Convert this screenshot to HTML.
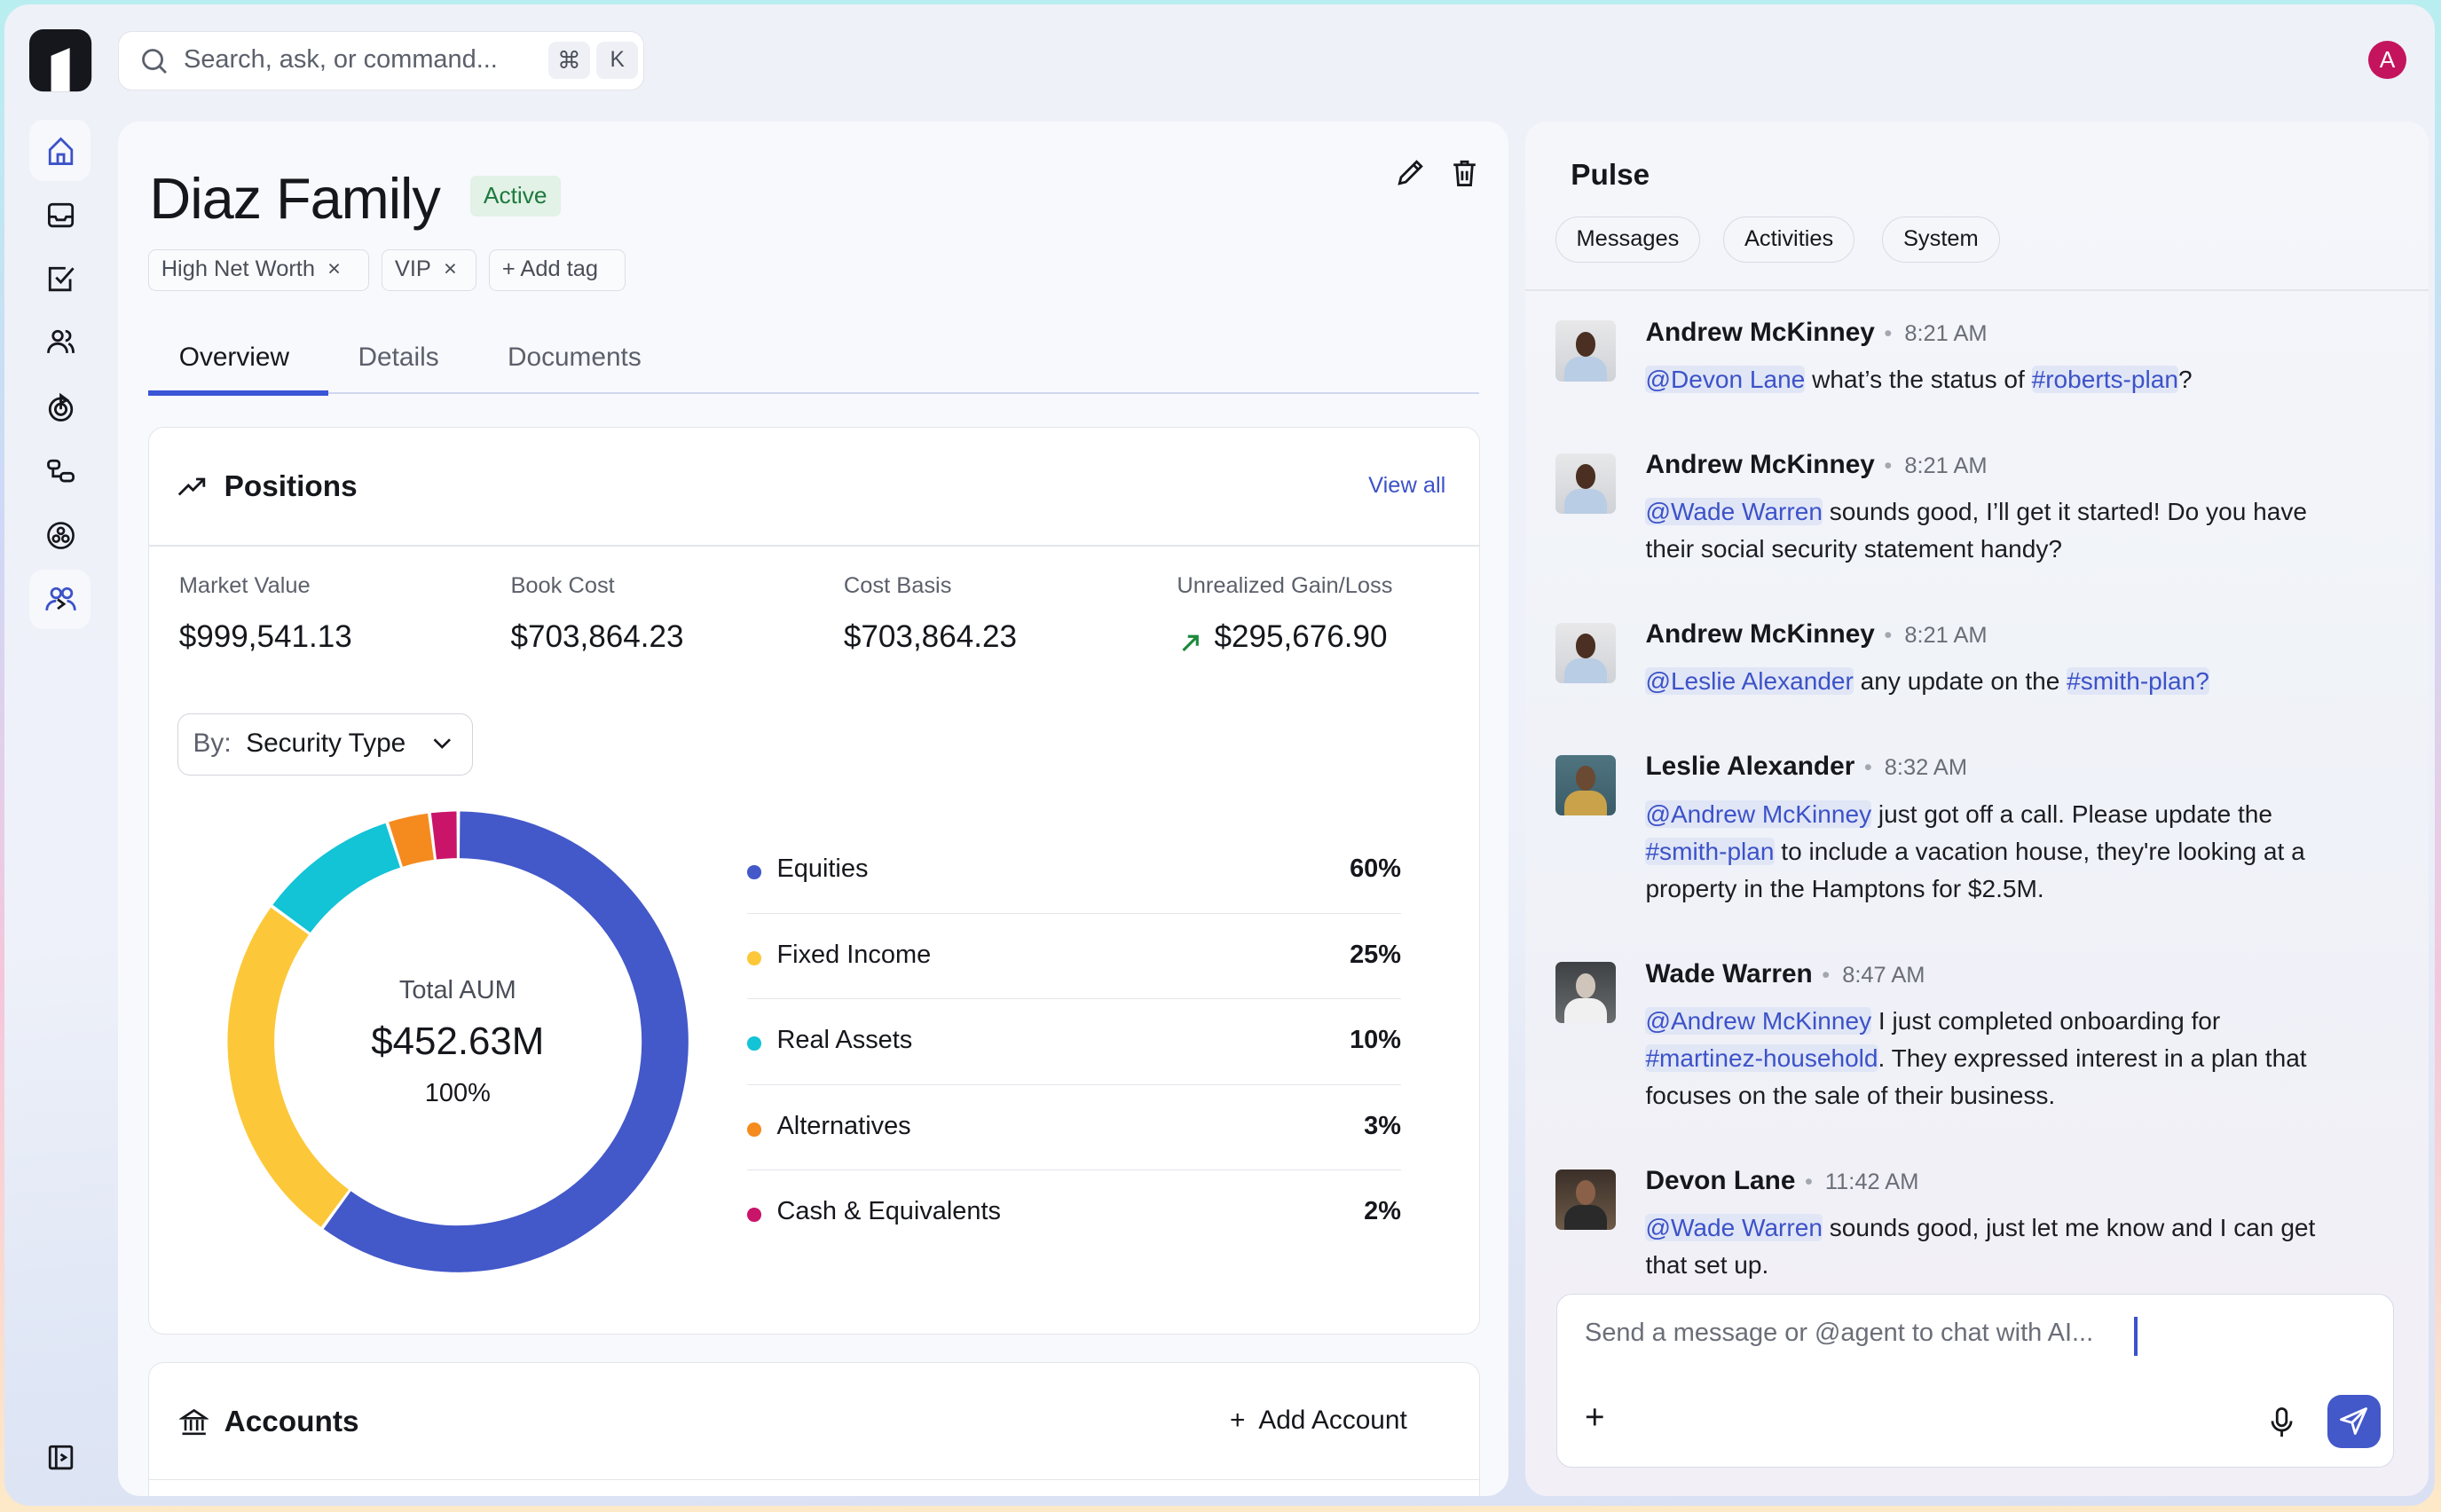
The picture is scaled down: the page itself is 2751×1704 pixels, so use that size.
<!DOCTYPE html>
<html><head><meta charset="utf-8">
<style>
*{box-sizing:border-box;margin:0;padding:0}
html,body{width:2751px;height:1704px;overflow:hidden;background:#fff}
#z{zoom:1.75446;width:1568px;height:971.3px;position:relative;font-family:"Liberation Sans",sans-serif;color:#16171c;
background:linear-gradient(180deg,#b9eef0 0%,#cfd8f6 35%,#f4c6dc 65%,#fde9c8 100%);}
.frame{position:absolute;left:3px;top:3px;right:4px;bottom:4px;border-radius:16px;background:linear-gradient(175deg,#eef1f8 0%,#eef1f9 55%,#dfe6f5 80%,#d9e0f3 100%)}
.abs{position:absolute}
.card{position:absolute;background:#f8f9fc;border-radius:14px}
.ic{position:absolute;left:29px;width:20px;height:20px}
.tag{position:absolute;top:160px;height:27px;border:1px solid #dcdee4;border-radius:5px;font-size:14.5px;color:#4a4e58;padding:4px 8px;background:#fafbfd}
.lbl{position:absolute;top:368px;font-size:14.5px;color:#5c606b}
.val{position:absolute;top:398px;font-size:20px;color:#16171c}
.leg{position:absolute;left:480px;width:420px;height:55px;font-size:16.5px;border-bottom:1px solid #e3e5ea}
.leg span.d{position:absolute;left:0;top:24px;width:9px;height:9px;border-radius:50%}
.leg span.t{position:absolute;left:19px;top:17px}
.leg span.p{position:absolute;right:0;top:17px;font-weight:bold}
.pill{position:absolute;top:139px;height:30px;border:1px solid #d8dbe3;border-radius:15px;font-size:14.5px;padding:6px 13px;background:#f5f6fa}
.msg{position:absolute;left:999px;width:540px}
.av{position:absolute;left:0;top:0;width:39px;height:39px;border-radius:4px;overflow:hidden;background:linear-gradient(#e8e8ea,#cfd2d6)}
.av i{position:absolute;left:13px;top:7px;width:13px;height:16px;border-radius:50%;background:#4a2f22}
.av b{position:absolute;left:6px;top:23px;width:27px;height:20px;border-radius:10px 10px 0 0;background:#b9cde4}
.nm{position:absolute;left:58px;top:-2px;font-size:17px;font-weight:bold;white-space:nowrap}
.nm em{font-style:normal;font-weight:normal;color:#6a6e78;font-size:14.5px;margin-left:6px}
.nm em:before{content:"•";color:#a3a7b0;margin-right:8px}
.tx{position:absolute;left:58px;top:26px;width:440px;font-size:16px;line-height:24px;color:#1c1d22}
.m{color:#3c52c8;background:#e1e6f6;border-radius:3px;white-space:nowrap}
</style></head><body><div id="z">
<div class="frame"></div>
<svg class="abs" style="left:19px;top:19px" width="40" height="40" viewBox="0 0 40 40"><rect width="40" height="40" rx="9" fill="#16171c"/><path d="M14 40V17l12-5V40z" fill="#fff"/></svg>
<div class="abs" style="left:76px;top:20px;width:338px;height:38px;background:#fff;border:1px solid #e2e4ea;border-radius:9px"></div>
<svg class="abs" style="left:90px;top:30px" width="18" height="18" viewBox="0 0 18 18" fill="none" stroke="#5c606b" stroke-width="1.6"><circle cx="8" cy="8" r="6"/><path d="M12.5 12.5l4 4"/></svg>
<div class="abs" style="left:118px;top:29px;font-size:16.5px;color:#5c606b">Search, ask, or command...</div>
<div class="abs" style="left:352px;top:27px;width:27px;height:24px;border-radius:5px;background:#eef0f6;font-size:15px;text-align:center;line-height:24px;color:#4a4e58">⌘</div>
<div class="abs" style="left:383px;top:27px;width:27px;height:24px;border-radius:5px;background:#eef0f6;font-size:14px;text-align:center;line-height:24px;color:#4a4e58">K</div>
<div class="abs" style="left:1521px;top:26px;width:25px;height:25px;border-radius:50%;background:#c4145e;color:#fff;font-size:15px;text-align:center;line-height:25px">A</div>
<div class="abs" style="left:19px;top:77px;width:39px;height:39px;border-radius:9px;background:#f7f8fc"></div>
<div class="abs" style="left:19px;top:366px;width:39px;height:38px;border-radius:9px;background:#f7f8fc"></div>
<svg class="ic" style="top:87px" viewBox="0 0 20 20" fill="none" stroke="#3c52c8" stroke-width="1.6"><path d="M3 9l7-7 7 7v9H3z M8 18v-6h4v6"/></svg>
<svg class="ic" style="top:128px" viewBox="0 0 20 20" fill="none" stroke="#16171c" stroke-width="1.6"><rect x="2.5" y="3" width="15" height="14" rx="2"/><path d="M2.5 11h4l1 2h5l1-2h4"/></svg>
<svg class="ic" style="top:169px" viewBox="0 0 20 20" fill="none" stroke="#16171c" stroke-width="1.6"><path d="M16 10v7H3V3h10"/><path d="M7 9l3 3 8-9"/></svg>
<svg class="ic" style="top:210px" viewBox="0 0 20 20" fill="none" stroke="#16171c" stroke-width="1.6"><circle cx="8" cy="6" r="3"/><path d="M2 17c0-4 3-6 6-6s6 2 6 6M13 3a3 3 0 010 6M15 11c2 1 3 3 3 6"/></svg>
<svg class="ic" style="top:252px" viewBox="0 0 20 20" fill="none" stroke="#16171c" stroke-width="1.6"><circle cx="10" cy="11" r="7"/><circle cx="10" cy="11" r="3.5"/><path d="M10 11V2l4 3-4 2"/></svg>
<svg class="ic" style="top:293px" viewBox="0 0 20 20" fill="none" stroke="#16171c" stroke-width="1.6"><rect x="2" y="3" width="7" height="5" rx="2"/><rect x="10" y="11" width="8" height="5" rx="2"/><path d="M5 8v5h5"/></svg>
<svg class="ic" style="top:334px" viewBox="0 0 20 20" fill="none" stroke="#16171c" stroke-width="1.5"><circle cx="10" cy="10" r="8"/><circle cx="10" cy="7" r="2"/><circle cx="7" cy="12" r="2"/><circle cx="13" cy="12" r="2"/></svg>
<svg class="ic" style="top:375px" viewBox="0 0 20 20" fill="none" stroke="#3c52c8" stroke-width="1.6"><circle cx="7" cy="6" r="3"/><circle cx="14" cy="6" r="3"/><path d="M1 17c0-4 3-6 6-6M19 17c0-4-3-6-5-6"/><path d="M8 10l4 3-4 3" stroke="#16171c"/></svg>
<svg class="ic" style="top:926px" viewBox="0 0 20 20" fill="none" stroke="#16171c" stroke-width="1.6"><rect x="3" y="3" width="14" height="14" rx="1"/><path d="M7 3v14M10 8l3 2-3 2"/></svg>

<div class="card" style="left:76px;top:78px;width:893px;height:883px"></div>
<div class="abs" style="left:96px;top:106px;font-size:37px;letter-spacing:-0.6px">Diaz Family</div>
<div class="abs" style="left:302px;top:113px;width:58px;height:26px;border-radius:4px;background:#e2f2e6;color:#1d7a3d;font-size:15px;text-align:center;line-height:26px">Active</div>
<svg class="abs" style="left:896px;top:101px" width="20" height="20" viewBox="0 0 20 20" fill="none" stroke="#16171c" stroke-width="1.6"><path d="M3 17l1-4L14 3l3 3L7 16z M12 5l3 3"/></svg>
<svg class="abs" style="left:931px;top:101px" width="20" height="20" viewBox="0 0 20 20" fill="none" stroke="#16171c" stroke-width="1.6"><path d="M3 5h14M8 5V3h4v2M5 5l1 13h8l1-13M8.5 9v6M11.5 9v6"/></svg>
<div class="tag" style="left:95px;width:142px">High Net Worth&nbsp;&nbsp;×</div>
<div class="tag" style="left:245px;width:61px">VIP&nbsp;&nbsp;×</div>
<div class="tag" style="left:314px;width:88px">+ Add tag</div>
<div class="abs" style="left:115px;top:220px;font-size:17px">Overview</div>
<div class="abs" style="left:230px;top:220px;font-size:17px;color:#5c606b">Details</div>
<div class="abs" style="left:326px;top:220px;font-size:17px;color:#5c606b">Documents</div>
<div class="abs" style="left:95px;top:252px;width:855px;height:1px;background:#cfd6ef"></div>
<div class="abs" style="left:95px;top:251px;width:116px;height:3px;background:#3a55d6"></div>

<div class="abs" style="left:95px;top:274px;width:856px;height:583px;background:#fff;border:1px solid #e3e5ea;border-radius:10px"></div>
<svg class="abs" style="left:114px;top:304px" width="20" height="18" viewBox="0 0 20 18" fill="none" stroke="#16171c" stroke-width="1.6"><path d="M1 14l6-6 3 3 7-7M12 4h5v5"/></svg>
<div class="abs" style="left:144px;top:302px;font-size:19px;font-weight:bold">Positions</div>
<div class="abs" style="left:879px;top:304px;font-size:14.5px;color:#3c52c8">View all</div>
<div class="abs" style="left:96px;top:350px;width:854px;height:1px;background:#e3e5ea"></div>
<div class="lbl" style="left:115px">Market Value</div><div class="lbl" style="left:328px">Book Cost</div><div class="lbl" style="left:542px">Cost Basis</div><div class="lbl" style="left:756px">Unrealized Gain/Loss</div>
<div class="val" style="left:115px">$999,541.13</div><div class="val" style="left:328px">$703,864.23</div><div class="val" style="left:542px">$703,864.23</div><div class="val" style="left:780px">$295,676.90</div>
<svg class="abs" style="left:758px;top:406px" width="14" height="14" viewBox="0 0 14 14" fill="none" stroke="#1d8a3d" stroke-width="1.8"><path d="M2 12L11 3M5 3h6v6"/></svg>
<div class="abs" style="left:114px;top:458px;width:190px;height:40px;border:1px solid #d3d5db;border-radius:8px;background:#fff"></div>
<div class="abs" style="left:124px;top:468px;font-size:17px"><span style="color:#5c606b">By:</span>&nbsp; Security Type</div>
<svg class="abs" style="left:277px;top:472px" width="14" height="12" viewBox="0 0 14 12" fill="none" stroke="#16171c" stroke-width="1.5"><path d="M2 3l5 5 5-5"/></svg>

<svg class="abs" style="left:144px;top:519px" width="300" height="300" viewBox="0 0 300 300">
<g transform="rotate(-90 150 150)" fill="none" stroke-width="30">
<circle cx="150" cy="150" r="133" stroke="#4358c9" stroke-dasharray="499.4 400" transform="rotate(0.5 150 150)"/>
<circle cx="150" cy="150" r="133" stroke="#fcc83a" stroke-dasharray="206.9 700" transform="rotate(216.5 150 150)"/>
<circle cx="150" cy="150" r="133" stroke="#13c3d6" stroke-dasharray="81.6 800" transform="rotate(306.5 150 150)"/>
<circle cx="150" cy="150" r="133" stroke="#f58a1f" stroke-dasharray="23.1 900" transform="rotate(342.5 150 150)"/>
<circle cx="150" cy="150" r="133" stroke="#c9146a" stroke-dasharray="14.7 900" transform="rotate(353.3 150 150)"/>
</g></svg>
<div class="abs" style="left:194px;top:627px;width:200px;text-align:center;font-size:16.5px;color:#4a4e58">Total AUM</div>
<div class="abs" style="left:194px;top:655px;width:200px;text-align:center;font-size:25px">$452.63M</div>
<div class="abs" style="left:194px;top:693px;width:200px;text-align:center;font-size:16.5px">100%</div>
<div class="leg" style="top:532px"><span class="d" style="background:#4358c9"></span><span class="t">Equities</span><span class="p">60%</span></div>
<div class="leg" style="top:587px"><span class="d" style="background:#fcc83a"></span><span class="t">Fixed Income</span><span class="p">25%</span></div>
<div class="leg" style="top:642px"><span class="d" style="background:#13c3d6"></span><span class="t">Real Assets</span><span class="p">10%</span></div>
<div class="leg" style="top:697px"><span class="d" style="background:#f58a1f"></span><span class="t">Alternatives</span><span class="p">3%</span></div>
<div class="leg" style="top:752px;border:none"><span class="d" style="background:#c9146a"></span><span class="t">Cash &amp; Equivalents</span><span class="p">2%</span></div>

<div class="abs" style="left:95px;top:875px;width:856px;height:86px;background:#fff;border:1px solid #e3e5ea;border-bottom:none;border-radius:10px 10px 0 0"></div>
<div class="abs" style="left:96px;top:950px;width:854px;height:1px;background:#e3e5ea"></div>
<svg class="abs" style="left:115px;top:904px" width="19" height="19" viewBox="0 0 19 19" fill="none" stroke="#16171c" stroke-width="1.5"><path d="M2 7l7.5-5 7.5 5zM4 8v7M7.5 8v7M11.5 8v7M15 8v7M2 17h15"/></svg>
<div class="abs" style="left:144px;top:903px;font-size:19px;font-weight:bold">Accounts</div>
<div class="abs" style="left:790px;top:903px;font-size:17px">+&nbsp; Add Account</div>

<div class="card" style="left:980px;top:78px;width:580px;height:883px;background:linear-gradient(180deg,#f5f6fa 0%,#eff2f8 50%,#f3eff6 100%)"></div>
<div class="abs" style="left:1009px;top:102px;font-size:19px;font-weight:bold">Pulse</div>
<div class="pill" style="left:999px">Messages</div>
<div class="pill" style="left:1107px">Activities</div>
<div class="pill" style="left:1209px">System</div>
<div class="abs" style="left:980px;top:186px;width:580px;height:1px;background:#e3e5ea"></div>

<div class="msg" style="top:206px"><div class="av"><i></i><b></b></div><div class="nm">Andrew McKinney<em>8:21 AM</em></div><div class="tx"><span class="m">@Devon Lane</span> what’s the status of <span class="m">#roberts-plan</span>?</div></div>
<div class="msg" style="top:291px"><div class="av"><i></i><b></b></div><div class="nm">Andrew McKinney<em>8:21 AM</em></div><div class="tx"><span class="m">@Wade Warren</span> sounds good, I’ll get it started! Do you have their social security statement handy?</div></div>
<div class="msg" style="top:400px"><div class="av"><i></i><b></b></div><div class="nm">Andrew McKinney<em>8:21 AM</em></div><div class="tx"><span class="m">@Leslie Alexander</span> any update on the <span class="m">#smith-plan?</span></div></div>
<div class="msg" style="top:485px"><div class="av" style="background:linear-gradient(#4f7480,#3b5c68)"><i style="background:#6b4a33"></i><b style="background:#c9a24a"></b></div><div class="nm">Leslie Alexander<em>8:32 AM</em></div><div class="tx"><span class="m">@Andrew McKinney</span> just got off a call. Please update the <span class="m">#smith-plan</span> to include a vacation house, they're looking at a property in the Hamptons for $2.5M.</div></div>
<div class="msg" style="top:618px"><div class="av" style="background:linear-gradient(#3e4144,#6a6d70)"><i style="background:#cfc5bb"></i><b style="background:#f0f0f0"></b></div><div class="nm">Wade Warren<em>8:47 AM</em></div><div class="tx"><span class="m">@Andrew McKinney</span> I just completed onboarding for <span class="m">#martinez-household</span>. They expressed interest in a plan that focuses on the sale of their business.</div></div>
<div class="msg" style="top:751px"><div class="av" style="background:linear-gradient(#3a2f28,#6e5a48)"><i style="background:#8a6048"></i><b style="background:#2a2a2a"></b></div><div class="nm">Devon Lane<em>11:42 AM</em></div><div class="tx"><span class="m">@Wade Warren</span> sounds good, just let me know and I can get that set up.</div></div>

<div class="abs" style="left:1000px;top:831px;width:538px;height:112px;background:#fff;border:1px solid #d6dbeb;border-radius:10px"></div>
<div class="abs" style="left:1018px;top:847px;font-size:16.5px;color:#6a6e78">Send a message or @agent to chat with AI...</div>
<div class="abs" style="left:1371px;top:846px;width:2px;height:25px;background:#3c52c8"></div>
<div class="abs" style="left:1018px;top:898px;font-size:22px">+</div>
<svg class="abs" style="left:1456px;top:903px" width="20" height="22" viewBox="0 0 20 22" fill="none" stroke="#16171c" stroke-width="1.6"><rect x="7" y="2" width="6" height="11" rx="3"/><path d="M4 10a6 6 0 0012 0M10 16v4"/></svg>
<div class="abs" style="left:1495px;top:896px;width:34px;height:34px;border-radius:9px;background:#4358c9"></div>
<svg class="abs" style="left:1502px;top:903px" width="20" height="20" viewBox="0 0 20 20" fill="none" stroke="#fff" stroke-width="1.6" stroke-linejoin="round"><path d="M18 2L2 9l7 2 2 7zM18 2L9 11"/></svg>
</div></body></html>
